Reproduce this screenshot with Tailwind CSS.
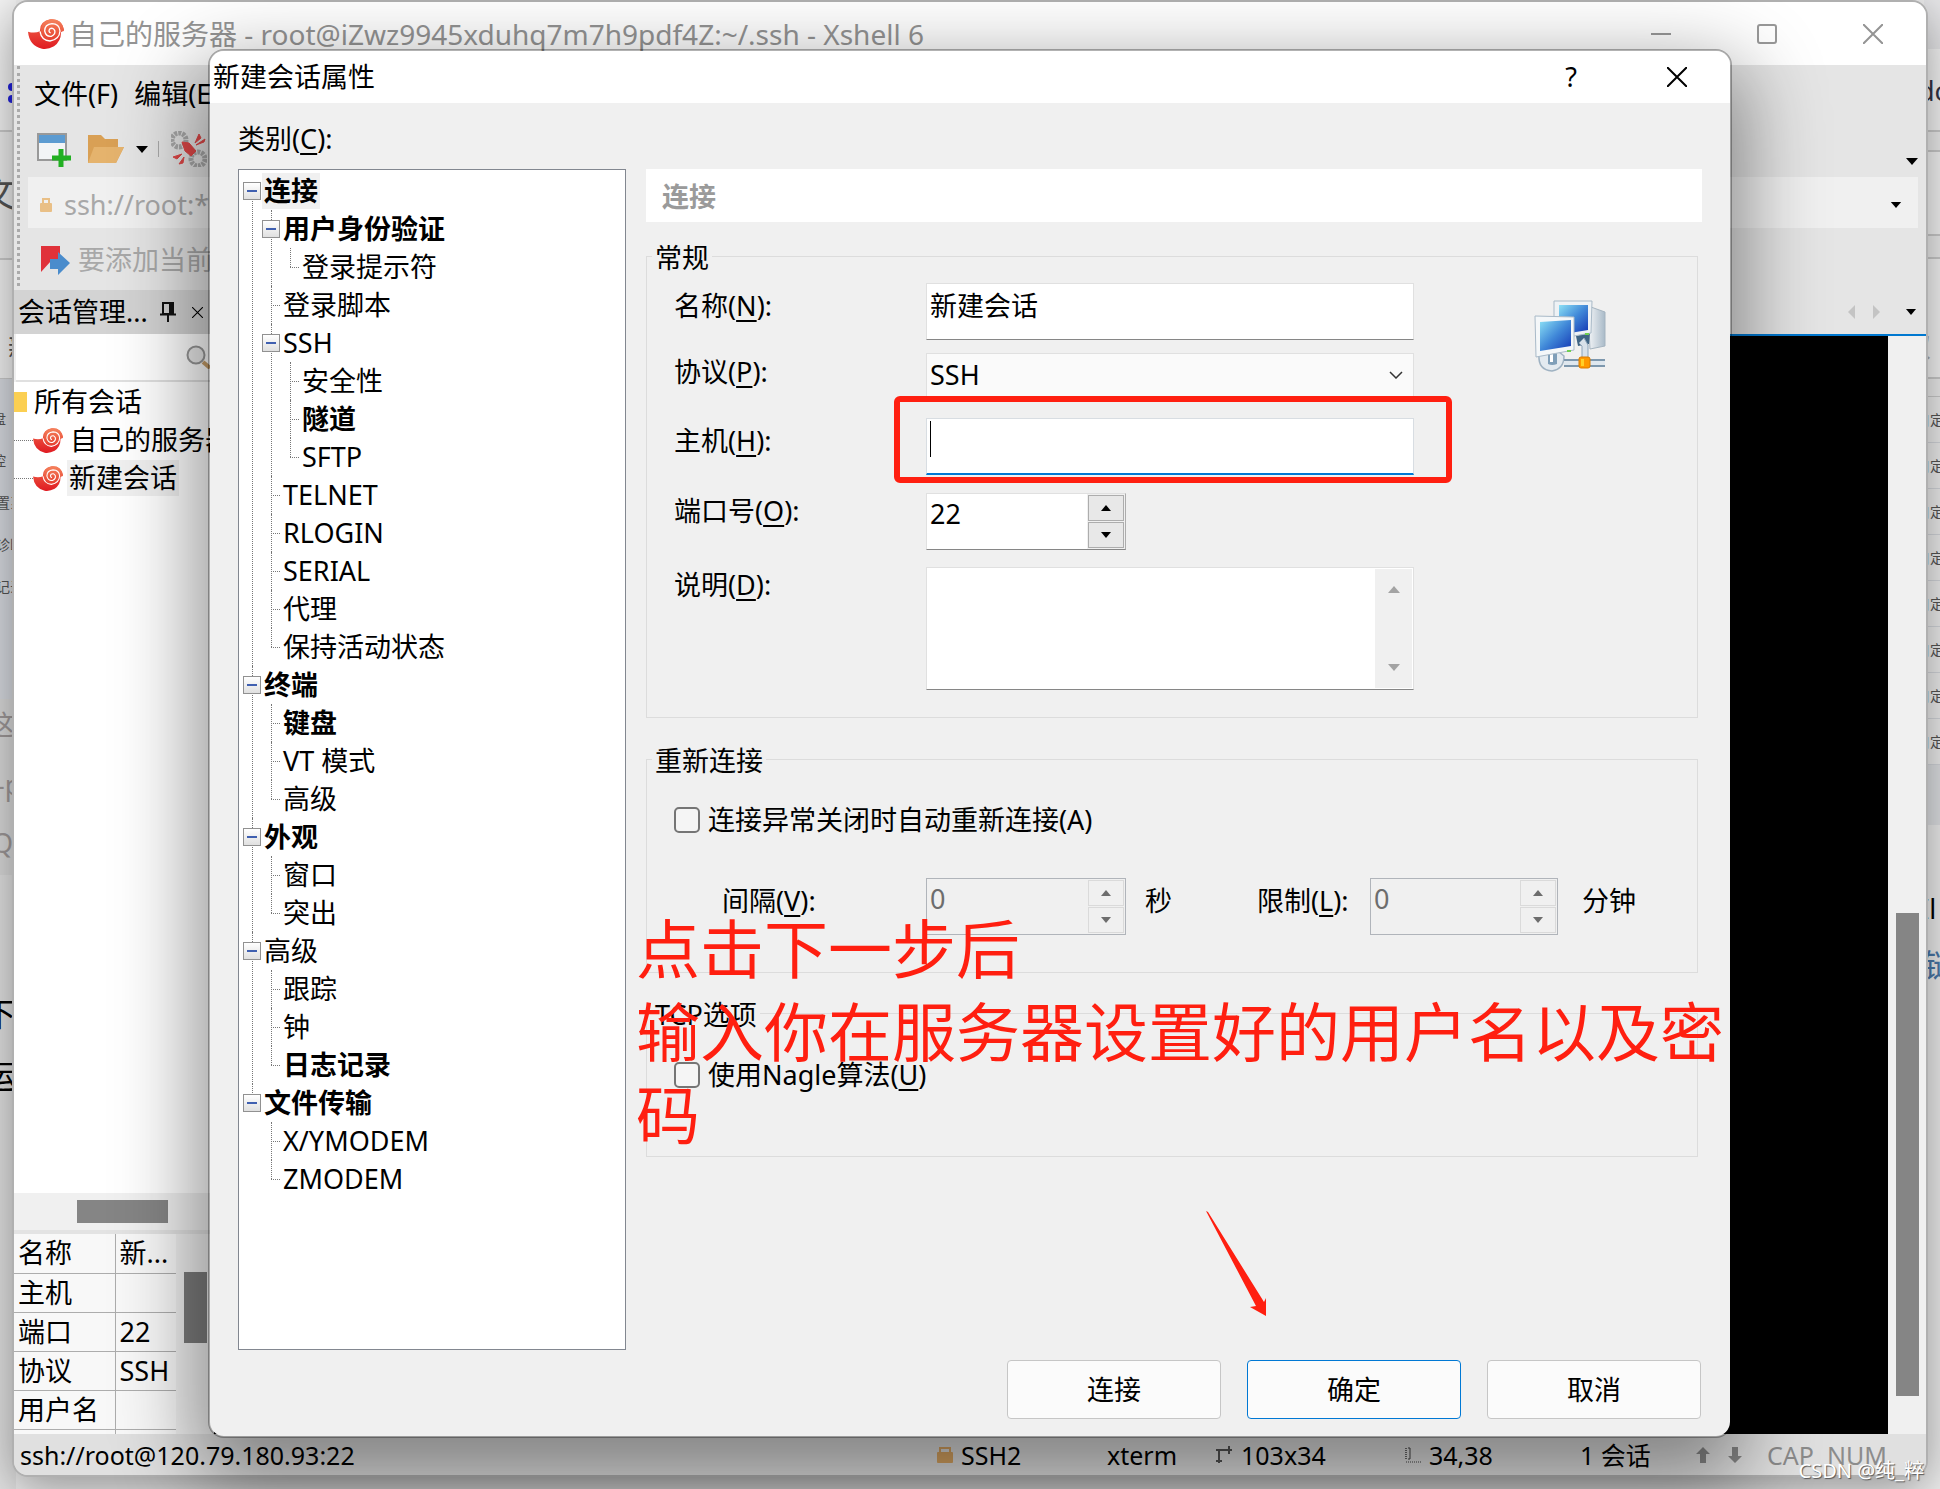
<!DOCTYPE html>
<html lang="zh-CN">
<head>
<meta charset="utf-8">
<title>Xshell 6</title>
<script src="https://cdn.jsdelivr.net/npm/@tailwindcss/browser@4"></script>
</head>
<body class="relative min-h-screen overflow-hidden bg-[#efefef] font-['Noto_Sans','Noto_Sans_CJK_SC',sans-serif] text-[27px] leading-9 text-black">

<!-- shared symbols -->
<svg class="absolute size-0" aria-hidden="true">
  <defs>
    <linearGradient id="shellTop" x1="0" y1="0" x2="0" y2="1"><stop offset="0" stop-color="#f5825c"/><stop offset="1" stop-color="#e6402f"/></linearGradient>
    <linearGradient id="shellBowl" x1="0" y1="0" x2="0" y2="1"><stop offset="0" stop-color="#f0684a"/><stop offset="1" stop-color="#e01b22"/></linearGradient>
    <linearGradient id="screen" x1="0" y1="0" x2="1" y2="1"><stop offset="0" stop-color="#8be0f5"/><stop offset=".5" stop-color="#4088d8"/><stop offset="1" stop-color="#1437b4"/></linearGradient>
    <linearGradient id="tower" x1="0" y1="0" x2="1" y2="0"><stop offset="0" stop-color="#f4f6f8"/><stop offset="1" stop-color="#a9bac8"/></linearGradient>
    <symbol id="shell" viewBox="0 0 108 90">
      <path d="M0 38Q20 44 36 37Q34 8 66 1Q100-3 108 32L99 40Q100 66 78 82Q60 92 42 89Q4 80 0 38Z" fill="url(#shellBowl)"/>
      <path d="M38 36Q38 6 70 1Q104 0 108 36L92 40Q90 62 66 64Q42 60 38 36Z" fill="url(#shellTop)"/>
      <path d="M36 37Q40 64 66 66Q94 62 96 36Q94 14 72 14Q50 16 50 36Q54 54 70 52Q84 46 80 34Q74 24 65 30Q60 38 68 42" fill="none" stroke="#fff" stroke-width="4"/>
    </symbol>
    <symbol id="down" viewBox="0 0 12 7"><path d="M0 0H12L6 7Z" fill="currentColor"/></symbol>
    <symbol id="up" viewBox="0 0 12 7"><path d="M0 7H12L6 0Z" fill="currentColor"/></symbol>
    <symbol id="cross" viewBox="0 0 20 20"><path d="M0 0L20 20M20 0L0 20" stroke="currentColor" stroke-width="2"/></symbol>
  </defs>
</svg>

<!-- page behind the windows -->
<div class="flex min-h-screen justify-between overflow-hidden whitespace-nowrap text-[#555]" aria-hidden="true">
  <div class="w-4 overflow-hidden bg-[#e4e4e4]">
    <div class="flex h-[130px] flex-col items-end gap-1 bg-[#f5f5f5] pt-[83px]"><span class="size-2 rounded-full bg-[#2222dd]"></span><span class="size-2 rounded-full bg-[#2222dd]"></span></div>
    <div class="h-32 border-t-2 border-[#ccc] bg-[#eee] pt-11 text-[36px]"><span class="-ml-5">文</span></div>
    <div class="h-[120px] border-t-2 border-[#ccc] bg-[#f3f3f3] pt-[70px] pl-2">新</div>
    <div class="h-[321px] border-t border-[#ccc] bg-[#d9dce2] pt-5 text-sm leading-10">
      <div class="h-[42px]"><span class="-ml-2">盘</span></div>
      <div class="h-[42px]"><span class="-ml-2">控</span></div>
      <div class="h-[42px]"><span class="-ml-1">置系</span></div>
      <div class="h-[42px]"><span class="-ml-1">诊断</span></div>
      <div class="h-[42px]"><span class="-ml-1">记录</span></div>
    </div>
    <div class="h-[176px] bg-[#dcdcdc] pt-2 text-[#a09a9a]">
      <div class="h-[60px]"><span class="-ml-3">这</span></div>
      <div class="h-[58px]"><span class="-ml-1">-p</span></div>
      <div class="h-[42px]"><span class="-ml-2">Q</span></div>
    </div>
    <div class="pt-[108px] text-[32px] leading-[62px] text-black"><span class="-ml-4">下</span><br><span class="-ml-4">运</span></div>
  </div>
  <div class="w-4 bg-[#efefef]">
    <div class="h-[49px] bg-[#e8e8ea]"></div>
    <div class="h-[81px] bg-[#f6f6f6] pt-6 text-[#334]"><span class="-ml-1.5">do</span></div>
    <div class="h-[22px] border-y-2 border-[#ccc]"></div>
    <div class="h-[84px] border-b-2 border-[#ccc] bg-[#f6f6f6]"></div>
    <div class="h-[23px] border-b-2 border-[#ccc]"></div>
    <div class="h-[120px] border-b-2 border-[#ccc] bg-[#f6f6f6] pt-[70px] text-[#aaa]"><span class="-ml-5">双</span></div>
    <div class="h-[18px] border-b border-[#ccc]"></div>
    <div class="text-sm leading-[46px] [&>div]:h-[46px] [&>div]:border-b [&>div]:border-[#d5d8dd] [&_span]:-ml-2">
      <div><span>自定</span></div>
      <div><span>自定</span></div>
      <div><span>自定</span></div>
      <div><span>自定</span></div>
      <div><span>自定</span></div>
      <div><span>自定</span></div>
      <div><span>自定</span></div>
      <div><span>自定</span></div>
    </div>
    <div class="h-[60px] bg-[#e0e2e5]"></div>
    <div class="pt-[66px] text-black"><span class="-ml-1">Il</span></div>
    <div class="pt-5 text-[32px] text-[#4a78a8]">链</div>
  </div>
</div>

<!-- Xshell main window -->
<main class="absolute top-0 right-3 bottom-3 left-3 flex flex-col overflow-hidden rounded-2xl border-2 border-[#b0b0b0] bg-[#e5e5e5] shadow-[0_12px_50px_rgb(0_0_0/0.4)]">
  <header class="flex h-[63px] shrink-0 items-center bg-white text-[#949494]">
    <svg class="ml-3.5 h-[30px] w-9 shrink-0"><use href="#shell"/></svg>
    <h1 class="ml-[5px] flex-1 text-[28px] whitespace-nowrap">自己的服务器 - root@iZwz9945xduhq7m7h9pdf4Z:~/.ssh - Xshell 6</h1>
    <button class="flex h-full w-[106px] items-center justify-center" aria-label="最小化"><span class="h-0.5 w-5 bg-[#999]"></span></button>
    <button class="flex h-full w-[106px] items-center justify-center" aria-label="最大化"><span class="size-5 rounded-[3px] border-2 border-[#999]"></span></button>
    <button class="flex h-full w-[106px] items-center justify-center" aria-label="关闭"><svg class="size-5"><use href="#cross"/></svg></button>
  </header>

  <div class="flex h-[225px] shrink-0 pt-px">
    <div class="mb-1 ml-[3px] w-[3px] border-l-3 border-dotted border-[#aaa]"></div>
    <div class="ml-2 flex flex-1 flex-col">
      <nav class="flex h-[55px] items-center gap-4 pl-1.5 whitespace-nowrap"><a href="#">文件(F)</a><a href="#">编辑(E)</a></nav>
      <div class="flex h-[56px] items-center pr-2 pl-2">
        <svg class="h-9 w-9" viewBox="0 0 36 36"><rect x="2" y="3" width="28" height="26" fill="#f2f4f6" stroke="#999" stroke-width="2"/><rect x="3" y="4" width="26" height="8" fill="#5c9bd1"/><path d="M25 18V36M16 27H35" stroke="#22b022" stroke-width="5"/></svg>
        <svg class="ml-4 h-8 w-9" viewBox="0 0 36 32"><path d="M0 2H13L17 6H30V14H36L28 30H0Z" fill="#d9a055"/><path d="M6 14H36L28 30H0Z" fill="#e5b36d"/></svg>
        <svg class="ml-3 h-[7px] w-3"><use href="#down"/></svg>
        <span class="ml-2.5 h-4 w-px bg-[#aaa]"></span>
        <svg class="ml-3 h-9 w-9" viewBox="0 0 36 36"><g fill="none" stroke="#aaa" stroke-width="5" stroke-dasharray="3 1"><circle cx="8" cy="9" r="7"/><circle cx="27" cy="28" r="7"/></g><path d="M11 11L18 12L25 20L20 25L14 20ZM24 12L28 3L30 7ZM25 14L34 8L33 11ZM2 26L11 23L6 28ZM8 33L13 26L12 32Z" fill="#e04848" stroke="#e04848"/></svg>
        <svg class="mb-3 ml-auto h-[7px] w-3 self-end"><use href="#down"/></svg>
      </div>
      <div class="mr-2 flex h-[51px] items-center bg-[#f0f0f0] pt-1 pl-3 text-[#a8a8a8]">
        <svg class="h-3.5 w-3" viewBox="0 0 12 14"><rect y="5" width="12" height="9" rx="1" fill="#e9bf86"/><path d="M3 6V1H9V6" fill="none" stroke="#e9bf86" stroke-width="2"/></svg>
        <span class="ml-3">ssh://root:****</span>
        <svg class="mr-4 ml-auto h-1.5 w-3 text-black"><use href="#down"/></svg>
      </div>
      <div class="flex h-[62px] items-center pt-0.5 pl-3 text-[#a8a8a8]">
        <svg class="h-8 w-8" viewBox="0 0 32 32"><path d="M1 2H20V24L11 17L1 28Z" fill="#e0323a"/><path d="M10 15H18V8L30 19L18 31V25H10Z" fill="#4a8ccc"/></svg>
        <span class="ml-1.5 whitespace-nowrap">要添加当前会话</span>
      </div>
    </div>
  </div>

  <div class="flex min-h-0 flex-1">
    <!-- session manager -->
    <aside class="flex w-[200px] shrink-0 flex-col bg-[#f0f0f0]">
      <div class="flex h-11 items-center bg-[#d3d3d3] pl-1">
        <span class="whitespace-nowrap">会话管理...</span>
        <svg class="ml-3 h-5 w-4" viewBox="0 0 16 20"><path d="M3 1H13V12H3ZM0 12.500H16M8 13V20" fill="none" stroke="#111" stroke-width="2"/><path d="M9 1H13V12H9Z" fill="#111"/></svg>
        <svg class="ml-4 size-[11px]"><use href="#cross"/></svg>
      </div>
      <label class="ml-0.5 flex h-12 items-center border-b-2 border-[#e0e0e0] bg-white">
        <input class="w-[170px] bg-transparent outline-none" aria-label="搜索会话">
        <svg class="size-6 shrink-0" viewBox="0 0 24 24"><circle cx="10" cy="10" r="8.500" fill="#eee" stroke="#999" stroke-width="2"/><path d="M17 17L24 23" stroke="#c89f6a" stroke-width="4"/></svg>
      </label>
      <ul class="flex-1 bg-white pt-px whitespace-nowrap">
        <li class="flex h-[38px] items-center"><span class="h-5 w-[13px] bg-[#fbcf52]"></span><span class="ml-[7px]">所有会话</span></li>
        <li class="flex h-[38px] items-center overflow-hidden"><span class="w-[19px] shrink-0 border-t border-dotted border-[#777]"></span><svg class="h-[25px] w-[30px] shrink-0"><use href="#shell"/></svg><span class="ml-[7px]">自己的服务器</span></li>
        <li class="flex h-[38px] items-center"><span class="w-[19px] shrink-0 border-t border-dotted border-[#777]"></span><svg class="h-[25px] w-[30px] shrink-0"><use href="#shell"/></svg><span class="ml-1 bg-[#f0f0f0] px-0.5">新建会话</span></li>
      </ul>
      <div class="h-[41px] border-b-4 border-[#e3e3e3] pt-[7px]"><div class="ml-[63px] h-[23px] w-[91px] bg-[#858585]"></div></div>
      <div class="flex h-[200px] overflow-hidden">
        <table class="w-[162px] table-fixed border-collapse bg-[#f8f8f8] text-left [&_td]:border-b [&_td]:border-[#adadad] [&_td]:pl-1 [&_th]:w-[101px] [&_th]:border-r [&_th]:border-b [&_th]:border-[#adadad] [&_th]:pl-1 [&_th]:font-normal [&_tr]:h-[39px]">
          <tr><th>名称</th><td>新...</td></tr>
          <tr><th>主机</th><td></td></tr>
          <tr><th>端口</th><td>22</td></tr>
          <tr><th>协议</th><td>SSH</td></tr>
          <tr><th>用户名</th><td></td></tr>
          <tr><th></th><td></td></tr>
        </table>
        <div class="flex-1 pt-[38px] pl-2"><div class="h-[71px] w-[23px] bg-[#7c7c7c]"></div></div>
      </div>
    </aside>

    <!-- terminal -->
    <section class="flex flex-1 flex-col">
      <div class="flex h-[46px] items-center justify-end border-b-2 border-[#0078d0] pr-2.5">
        <svg class="h-3.5 w-[7px]" viewBox="0 0 7 14"><path d="M7 0V14L0 7Z" fill="#c4c4c4"/></svg>
        <svg class="ml-[18px] h-3.5 w-[7px]" viewBox="0 0 7 14"><path d="M0 0V14L7 7Z" fill="#c4c4c4"/></svg>
        <svg class="ml-[26px] h-1.5 w-2.5"><use href="#down"/></svg>
      </div>
      <div class="flex flex-1">
        <div class="flex-1 bg-black"></div>
        <div class="flex w-[38px] items-end justify-center bg-[#f0f0f0] pb-[38px]"><div class="h-[483px] w-[23px] bg-[#858585]"></div></div>
      </div>
    </section>
  </div>

  <footer class="flex h-[41px] shrink-0 items-center bg-[#e0e0e0] pl-1.5 text-[25px] whitespace-nowrap">
    <span class="flex-1">ssh://root@120.79.180.93:22</span>
    <span class="flex w-[170px] items-center gap-2"><svg class="h-4 w-4" viewBox="0 0 16 16"><rect y="5" width="16" height="11" rx="1" fill="#dca763"/><path d="M3 6V1H13V6" fill="none" stroke="#dca763" stroke-width="2"/></svg>SSH2</span>
    <span class="w-[108px]">xterm</span>
    <span class="flex w-[190px] items-center gap-2"><svg class="h-[18px] w-[18px]" viewBox="0 0 18 18"><path d="M1 4H17M14 0V8M4 3V17M1 15H7" fill="none" stroke="#555" stroke-width="2"/></svg>103x34</span>
    <span class="flex w-[175px] items-center gap-2"><svg class="h-4 w-4" viewBox="0 0 16 16"><path d="M1 1V12" stroke="#444" stroke-width="1.500" stroke-dasharray="1 1"/><path d="M3 1H5V12H3" fill="none" stroke="#444"/><path d="M1 15H16" stroke="#444" stroke-dasharray="1 1"/></svg>34,38</span>
    <span class="w-[115px]">1 会话</span>
    <svg class="h-4 w-4" viewBox="0 0 16 16"><path d="M8 0L15 7H11V16H5V7H1Z" fill="#888"/></svg>
    <svg class="ml-4 h-4 w-4" viewBox="0 0 16 16"><path d="M8 16L15 9H11V0H5V9H1Z" fill="#888"/></svg>
    <span class="ml-6 w-[60px] text-[#8c8c8c]">CAP</span>
    <span class="w-[99px] text-[#8c8c8c]">NUM</span>
  </footer>
</main>

<!-- new session properties dialog -->
<form role="dialog" aria-labelledby="dlg-title" class="absolute inset-x-[208px] top-[49px] bottom-[51px] flex flex-col overflow-hidden rounded-2xl border-2 border-black/30 bg-[#f0f0f0] bg-clip-padding shadow-[0_30px_80px_14px_rgb(0_0_0/0.42)]">
  <header class="flex h-[52px] shrink-0 items-center bg-white pl-[3px]">
    <h2 id="dlg-title" class="flex-1">新建会话属性</h2>
    <button type="button" class="h-full w-[106px]">?</button>
    <button type="button" class="flex h-full w-[106px] items-center justify-center" aria-label="关闭"><svg class="size-5"><use href="#cross"/></svg></button>
  </header>
  <p class="mt-[18px] mb-3 ml-7">类别(<u class="underline-offset-4">C</u>):</p>

  <div class="grid min-h-0 flex-1 grid-cols-[388px_1fr] gap-5 px-7">
    <ul class="border border-[#828790] bg-white pt-0.5 pl-1 [&_button]:mr-px [&_button]:flex [&_button]:size-[18px] [&_button]:items-center [&_button]:justify-center [&_button]:border [&_button]:border-[#919191] [&_button]:bg-linear-to-b [&_button]:from-white [&_button]:to-[#e0e0e0] [&_button]:before:h-0.5 [&_button]:before:w-2.5 [&_button]:before:bg-[#4060b0] [&_div]:relative [&_div]:flex [&_div]:h-[38px] [&_div]:items-center [&_div>:last-child]:px-0.5 [&_i]:mr-px [&_i]:ml-[9px] [&_i]:w-[9px] [&_i]:border-t [&_i]:border-dotted [&_i]:border-[#777] [&_li]:relative [&_li]:before:absolute [&_li]:before:top-0 [&_li]:before:bottom-0 [&_li]:before:left-[9px] [&_li]:before:border-l [&_li]:before:border-dotted [&_li]:before:border-[#777] [&_li:last-child]:before:bottom-auto [&_li:last-child]:before:h-[19px] [&>li:first-child]:before:top-[19px] [&_ul]:pl-[19px]">
      <li><div><button type="button" aria-label="折叠"></button><b class="bg-[#f0f0f0]">连接</b></div>
        <ul>
          <li><div><button type="button" aria-label="折叠"></button><b>用户身份验证</b></div>
            <ul><li><div><i></i><span>登录提示符</span></div></li></ul></li>
          <li><div><i></i><span>登录脚本</span></div></li>
          <li><div><button type="button" aria-label="折叠"></button><span>SSH</span></div>
            <ul>
              <li><div><i></i><span>安全性</span></div></li>
              <li><div><i></i><b>隧道</b></div></li>
              <li><div><i></i><span>SFTP</span></div></li>
            </ul></li>
          <li><div><i></i><span>TELNET</span></div></li>
          <li><div><i></i><span>RLOGIN</span></div></li>
          <li><div><i></i><span>SERIAL</span></div></li>
          <li><div><i></i><span>代理</span></div></li>
          <li><div><i></i><span>保持活动状态</span></div></li>
        </ul></li>
      <li><div><button type="button" aria-label="折叠"></button><b>终端</b></div>
        <ul>
          <li><div><i></i><b>键盘</b></div></li>
          <li><div><i></i><span>VT 模式</span></div></li>
          <li><div><i></i><span>高级</span></div></li>
        </ul></li>
      <li><div><button type="button" aria-label="折叠"></button><b>外观</b></div>
        <ul>
          <li><div><i></i><span>窗口</span></div></li>
          <li><div><i></i><span>突出</span></div></li>
        </ul></li>
      <li><div><button type="button" aria-label="折叠"></button><span>高级</span></div>
        <ul>
          <li><div><i></i><span>跟踪</span></div></li>
          <li><div><i></i><span>钟</span></div></li>
          <li><div><i></i><b>日志记录</b></div></li>
        </ul></li>
      <li><div><button type="button" aria-label="折叠"></button><b>文件传输</b></div>
        <ul>
          <li><div><i></i><span>X/YMODEM</span></div></li>
          <li><div><i></i><span>ZMODEM</span></div></li>
        </ul></li>
    </ul>

    <div>
      <h3 class="h-[53px] bg-white pl-4 leading-[55px] font-bold text-[#9a9a9a]">连接</h3>

      <fieldset class="mt-3.5 mr-1 flex border border-[#dcdcdc] pt-[7px] pb-[27px] pl-[27px]">
        <legend class="ml-[-22px] px-[3px] pt-1">常规</legend>
        <div>
          <div class="flex">
            <label for="name" class="w-[252px] pt-[5px]">名称(<u class="underline-offset-4">N</u>):</label>
            <input id="name" value="新建会话" class="h-[57px] w-[488px] border border-[#e0e0e0] border-b-[#868686] bg-white px-[3px] pb-3.5 outline-none">
          </div>
          <div class="mt-[13px] flex">
            <label for="proto" class="w-[252px] pt-px">协议(<u class="underline-offset-4">P</u>):</label>
            <div class="relative h-11 w-[488px]">
              <select id="proto" class="size-full appearance-none border border-[#e0e0e0] bg-[#fafafa] px-[3px] outline-none"><option>SSH</option></select>
              <svg class="pointer-events-none absolute top-[18px] right-[11px] h-2 w-3.5" viewBox="0 0 14 8"><path d="M1 1L7 7L13 1" fill="none" stroke="#333" stroke-width="1.500"/></svg>
            </div>
          </div>
          <div class="mt-[21px] flex">
            <label for="host" class="w-[252px] pt-[5px]">主机(<u class="underline-offset-4">H</u>):</label>
            <div class="relative">
              <input id="host" class="h-[57px] w-[488px] border border-b-2 border-[#d8dde2] border-b-[#0078d4] bg-white px-[3px] outline-none">
              <span class="absolute top-[3px] left-1 h-9 w-px bg-black"></span>
              <span class="pointer-events-none absolute -top-[22px] -right-[38px] -bottom-2 -left-8 rounded-md border-6 border-[#ff1f10]"></span>
            </div>
          </div>
          <div class="mt-[18px] flex">
            <label for="port" class="w-[252px]">端口号(<u class="underline-offset-4">O</u>):</label>
            <div class="flex h-[57px] w-[200px] border border-[#e0e0e0] border-r-[#adadad] border-b-[#868686] bg-white">
              <input id="port" value="22" class="min-w-0 flex-1 px-[3px] pb-4 outline-none">
              <div class="grid w-[38px] gap-px border-[#adadad] bg-[#f0f0f0] p-px [&_button]:flex [&_button]:items-center [&_button]:justify-center [&_button]:border [&_button]:border-[#adadad] [&_button]:bg-[#e8e8e8] [&_svg]:h-1.5 [&_svg]:w-2.5">
                <button type="button" aria-label="增加"><svg><use href="#up"/></svg></button>
                <button type="button" aria-label="减少"><svg><use href="#down"/></svg></button>
              </div>
            </div>
          </div>
          <div class="mt-[17px] flex">
            <label for="desc" class="w-[252px]">说明(<u class="underline-offset-4">D</u>):</label>
            <div class="flex h-[123px] w-[488px] border border-[#e0e0e0] border-b-[#868686] bg-white">
              <textarea id="desc" class="flex-1 resize-none px-[3px] outline-none"></textarea>
              <div class="my-px mr-px flex w-[37px] flex-col items-center justify-between bg-[#f0f0f0] py-4 text-[#a3a3a3] [&_svg]:h-[9px] [&_svg]:w-3">
                <svg preserveAspectRatio="none"><use href="#up"/></svg>
                <svg><use href="#down"/></svg>
              </div>
            </div>
          </div>
        </div>
        <svg class="mt-[17px] ml-[120px] size-[72px] shrink-0" viewBox="0 0 72 72">
          <path d="M54 6L71 12V46L56 49Z" fill="url(#tower)" stroke="#a5b4c0"/>
          <path d="M42 36L56 32L55 44L44 46Z" fill="#3f6484"/>
          <path d="M20 1L58 1L57 33L40 36L20 30Z" fill="#eef2f5" stroke="#a9bac8"/>
          <path d="M25 5L54 5V30L36 33L25 30Z" fill="url(#screen)"/>
          <path d="M5 55Q4 70 18 71Q30 69 30 56L25 52H13Z" fill="#e3eaf0" stroke="#9fb2c2" stroke-width="1.500"/>
          <path d="M14 54V64Q18 66 23 64V53Z" fill="#7f9fb9"/><path d="M16 54V62H19V54Z" fill="#fff"/>
          <path d="M30 60H71M30 66H71" stroke="#7d97ad" stroke-width="2"/><path d="M30 63H71" stroke="#dfe7ee" stroke-width="4"/>
          <path d="M48 58V46L45 43L50 38L54 45V58Z" fill="#d8e1e9" stroke="#8da4b8"/>
          <path d="M1 16L40 17V50L2 57Z" fill="#f4f7f9" stroke="#a9bac8"/>
          <path d="M6 22L37 20V46L6 51Z" fill="url(#screen)"/>
          <rect x="45" y="57" width="11" height="11" rx="2" fill="#f90" stroke="#d97b00"/><path d="M47 59H50V66H47Z" fill="#ffd028"/>
          <path d="M33 51H37M51 34H55" stroke="#6fd050" stroke-width="2"/>
        </svg>
      </fieldset>

      <fieldset class="mt-[21px] mr-1 border border-[#dcdcdc] pt-[23px] pb-[37px] pl-[27px]">
        <legend class="ml-[-22px] px-[3px] pt-1">重新连接</legend>
        <label class="flex items-center"><input type="checkbox" class="mr-2 size-[26px] appearance-none rounded-[5px] border-2 border-[#757575] bg-[#f5f5f5]">连接异常关闭时自动重新连接(A)</label>
        <div class="mt-10 flex pl-12 [&>label]:pt-[5px] [&>span]:pt-[5px] [&_button]:flex [&_button]:items-center [&_button]:justify-center [&_button]:border [&_button]:border-[#dadada] [&_button]:text-[#6d6d6d] [&_button_svg]:h-1.5 [&_button_svg]:w-2.5">
          <label for="interval" class="w-[204px]">间隔(<u class="underline-offset-4">V</u>):</label>
          <div class="flex h-[57px] w-[200px] border border-[#b0b4ba]">
            <input id="interval" value="0" disabled class="min-w-0 flex-1 px-[3px] pb-4 text-[#6d6d6d]">
            <div class="grid w-[38px] gap-px p-px">
              <button type="button" aria-label="增加"><svg><use href="#up"/></svg></button>
              <button type="button" aria-label="减少"><svg><use href="#down"/></svg></button>
            </div>
          </div>
          <span class="ml-[19px] w-28">秒</span>
          <label for="limit" class="w-[113px]">限制(<u class="underline-offset-4">L</u>):</label>
          <div class="flex h-[57px] w-[188px] border border-[#b0b4ba]">
            <input id="limit" value="0" disabled class="min-w-0 flex-1 px-[3px] pb-4 text-[#6d6d6d]">
            <div class="grid w-[38px] gap-px p-px">
              <button type="button" aria-label="增加"><svg><use href="#up"/></svg></button>
              <button type="button" aria-label="减少"><svg><use href="#down"/></svg></button>
            </div>
          </div>
          <span class="ml-6">分钟</span>
        </div>
      </fieldset>

      <fieldset class="mt-5 mr-1 border border-[#dcdcdc] pt-6 pb-[63px] pl-[27px]">
        <legend class="ml-[-22px] px-[3px] pt-1">TCP选项</legend>
        <label class="flex items-center"><input type="checkbox" class="mr-2 size-[26px] appearance-none rounded-[5px] border-2 border-[#757575] bg-[#f5f5f5]"><span>使用Nagle算法(<u class="underline-offset-4">U</u>)</span></label>
      </fieldset>
    </div>
  </div>

  <footer class="mt-2.5 mr-[29px] mb-[17px] flex shrink-0 justify-end gap-[26px] [&_button]:h-[59px] [&_button]:w-[214px] [&_button]:rounded [&_button]:border [&_button]:bg-[#fbfbfb]">
    <button type="button" class="border-[#c6c6c6]">连接</button>
    <button type="submit" class="border-[#0078d4]">确定</button>
    <button type="button" class="border-[#c6c6c6]">取消</button>
  </footer>
</form>

<!-- annotations -->
<p class="pointer-events-none absolute top-[907px] left-[636px] w-[1096px] text-[64px] leading-[83px] text-[#ff1f10]">点击下一步后<br>输入你在服务器设置好的用户名以及密码</p>
<svg class="pointer-events-none absolute top-[1210px] left-[1205px] h-[108px] w-[64px]" viewBox="0 0 64 108"><path d="M1 1L3 2L59 92L61 88L61 106L45 97L51 96Z" fill="#ff1f10"/></svg>
<p class="absolute right-4 bottom-0 text-xl leading-9 text-white text-shadow-[1px_1px_1px_#555]">CSDN @纯_粹</p>
</body>
</html>
